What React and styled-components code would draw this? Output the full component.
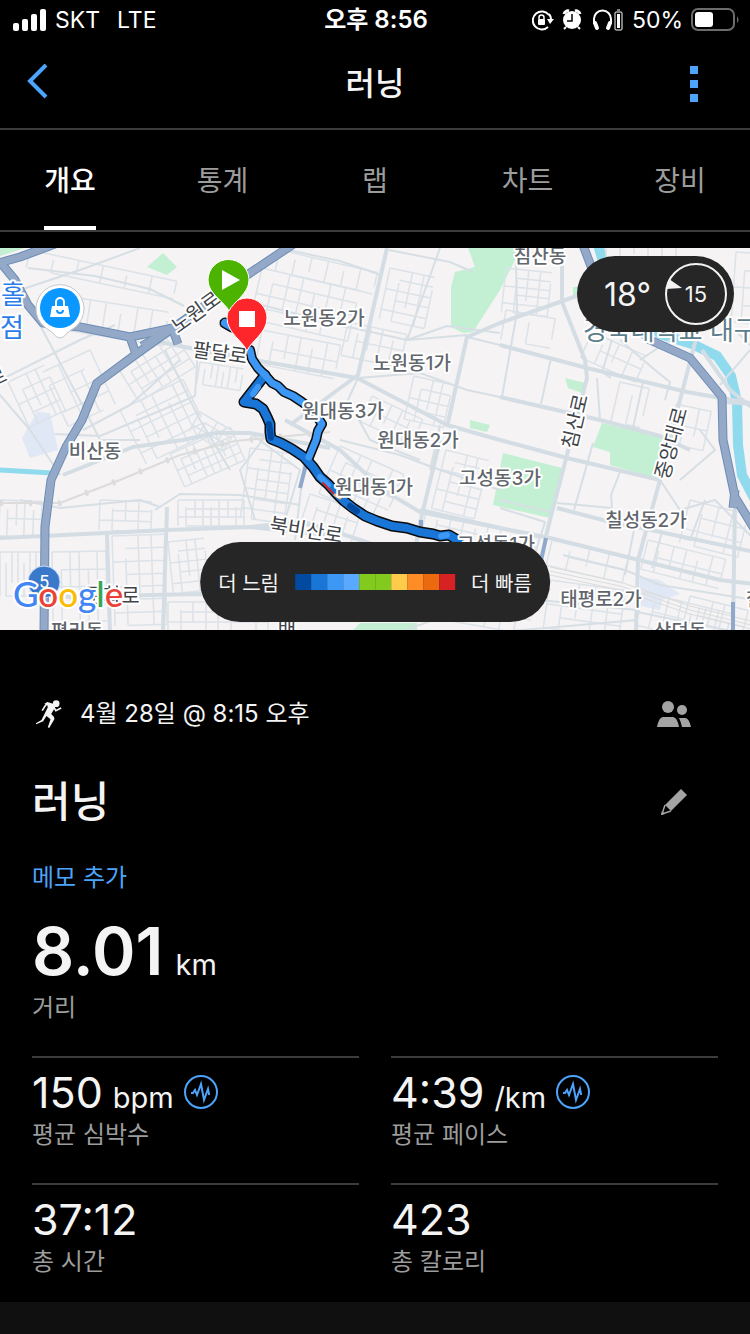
import React, { useState } from "react";
import styled, { createGlobalStyle } from "styled-components";

const tabs = ["개요", "통계", "랩", "차트", "장비"];

// 페이스 범례 색상 (느림 -> 빠름)
const paceColors = [
    "#024a9f",
    "#1a76d6",
    "#3c97f5",
    "#58a9ff",
    "#82ca1e",
    "#82ca1e",
    "#ffcb4b",
    "#ff8d25",
    "#ec6a0f",
    "#d62222",
];

const stats = [
    { value: "150", unit: "bpm", label: "평균 심박수", chart: true },
    { value: "4:39", unit: "/km", label: "평균 페이스", chart: true },
    { value: "37:12", label: "총 시간" },
    { value: "423", label: "총 칼로리" },
];

const highways = [
    "M-5 264L20 257L55 244",
    "M0 262L15 280L28 305L43 323L80 327L130 337L173 328",
    "M295 243L250 273L210 302L173 328L135 355L97 383L82 420L66 447L51 480L45 527L44 635",
    "M130 337L136 354",
    "M172 328L178 344",
    "M142 346L172 328",
    "M583 245L600 290L650 340L690 358L722 397L723 440L735 497L755 530",
    "M735 490L733 508",
];

const mainRoads = [
    "M150 340L200 350L260 361L357 378L447 425L500 440L567 458L660 480",
    "M387 248L358 375L290 425",
    "M447 427L467 337L500 323L560 302L590 291",
    "M562 263V302L585 360L587 378L567 455L550 520L545 540",
    "M500 345L587 368L687 392L755 404",
    "M500 397L600 420L660 436L690 450",
    "M697 335L680 400L660 480L638 560L636 632",
    "M420 510L500 528L550 538L647 562L720 580L755 584",
    "M557 508L603 520L755 552",
    "M0 538L43 536L167 530L250 527L340 536",
    "M167 507L163 632",
    "M107 535L110 632",
    "M63 475L133 447L183 440L215 433L250 433L330 448",
    "M735 500L733 632",
    "M285 420L340 450L383 490L420 512L500 528",
    "M440 440L420 523L415 550",
    "M60 597L200 594L290 600",
    "M250 527L300 522L345 535L420 560",
    "M724 402L755 404",
    "M702 350L730 390L755 410",
];

const midRoads = [
    "M28 268L95 276L150 289L184 306",
    "M20 290L80 270L140 248",
    "M0 380L80 340L115 325",
    "M40 325L85 410L100 440L140 440",
    "M165 350L200 420L230 470",
    "M250 302L340 325L407 340L467 335",
    "M288 250L340 261L381 275",
    "M389 250L450 262L473 272",
    "M407 340L447 326L500 333",
    "M467 337L500 345",
    "M407 340L425 290L440 248",
    "M500 397L467 390L420 373L358 378",
    "M0 395L30 430L60 475",
    "M55 434L100 436L195 396",
    "M195 396L198 350",
    "M20 500L60 508L140 500L160 507",
    "M155 510L180 494L240 495L300 505",
    "M83 430L130 405L180 360",
    "M500 500L550 512",
    "M500 508L545 522L530 570",
    "M637 610L500 596L400 632",
    "M637 612L755 636",
    "M500 632L637 620",
    "M563 555L625 570L660 585L755 600",
    "M652 568L662 532L690 540L705 500",
    "M625 575L634 530",
    "M516 263L517 312L502 397",
    "M597 378L600 420",
    "M551 358L541 404",
    "M643 382L633 428",
    "M593 443L574 510",
    "M620 472L611 495L612 508L557 503",
    "M660 480L680 510L715 500L755 540",
    "M680 480L715 450L700 430",
    "M720 385L750 350",
    "M735 330L755 350",
    "M340 440L400 455L440 470L500 490",
    "M305 455L295 540",
    "M270 430L240 470L255 520",
    "M250 433L300 470L285 520",
    "M358 378L348 400L370 440L420 460",
    "M440 425L430 470",
    "M620 340L655 370L670 382L665 400",
    "M611 378L602 372L612 340",
    "M670 340L640 360",
];

// 골목길 블록: [x, y, 너비, 높이, 각도, 열, 행]
const blocks = [
    [60, 295, 110, 34, 9, 7, 1],
    [30, 250, 150, 18, 12, 6, 1],
    [8, 382, 40, 50, -25, 4, 4],
    [90, 350, 60, 52, 65, 4, 3],
    [118, 368, 66, 40, -32, 7, 4],
    [120, 410, 70, 60, -26, 6, 5],
    [200, 362, 44, 22, 9, 7, 1],
    [200, 412, 40, 22, 30, 4, 3],
    [262, 268, 100, 52, 13, 7, 4],
    [280, 250, 100, 22, 13, 6, 1],
    [262, 330, 80, 34, 11, 6, 2],
    [390, 268, 46, 52, 12, 4, 5],
    [348, 322, 60, 34, 12, 5, 2],
    [414, 376, 40, 44, 13, 4, 4],
    [372, 396, 56, 28, 25, 5, 2],
    [506, 268, 46, 44, 6, 4, 5],
    [506, 310, 50, 30, 10, 2, 1],
    [620, 382, 30, 40, 13, 2, 1],
    [0, 500, 42, 36, 2, 5, 2],
    [0, 552, 42, 44, 0, 7, 1],
    [52, 552, 54, 70, -1, 6, 4],
    [112, 536, 52, 90, -2, 4, 7],
    [100, 500, 52, 30, 2, 4, 3],
    [168, 542, 36, 52, -6, 4, 5],
    [168, 602, 100, 30, 0, 8, 3],
    [178, 500, 66, 26, 0, 8, 3],
    [170, 454, 66, 36, -24, 8, 4],
    [250, 448, 44, 70, 8, 4, 7],
    [310, 494, 54, 40, 18, 5, 3],
    [340, 446, 70, 52, 24, 6, 4],
    [446, 450, 44, 60, 14, 4, 6],
    [426, 512, 116, 20, 13, 9, 2],
    [552, 540, 78, 26, 13, 4, 2],
    [550, 580, 76, 48, 8, 5, 4],
    [648, 540, 80, 30, 14, 6, 2],
    [644, 592, 90, 34, 14, 7, 2],
    [690, 500, 60, 44, 14, 4, 3],
    [676, 404, 36, 40, 12, 3, 2],
    [592, 332, 60, 28, 24, 4, 2],
    [450, 560, 90, 60, 10, 6, 4],
    [690, 596, 60, 34, 14, 5, 2],
    [606, 240, 70, 20, 0, 5, 1],
    [736, 252, 20, 70, 4, 2, 4],
];

const route =
    "M250 350L252 359L258 368L265 375L272 383L278 386L284 392L293 396L302 402L314 411L318 418L322 424L318 431L316 440L309 457";
const routeSouth =
    "M265 375L258 384L251 393L244 402L256 404L263 409L267 417L270 424L270 432L271 439L281 443L292 449L304 457L313 467L320 477L328 484L337 494L344 501L353 508L365 516L377 521L392 526L407 528L420 532L433 534L440 536L449 535L459 541";

const districts = [
    ["침산동", 540, 263],
    ["노원동2가", 324, 325],
    ["노원동1가", 412, 370],
    ["원대동3가", 343, 418],
    ["원대동2가", 418, 447],
    ["원대동1가", 374, 494],
    ["고성동3가", 500, 485],
    ["고성동1가", 496, 551],
    ["칠성동2가", 646, 527],
    ["태평로2가", 601, 606],
    ["비산동", 95, 458],
    ["평리동", 77, 638],
    ["상덕동", 680, 638],
    ["칠성동", 772, 606],
];

// [이름, x, y, 각도]
const streets = [
    ["노원로", 200, 318, -36],
    ["팔달로", 219, 360, 8],
    ["북비산로", 305, 537, 9],
    ["침산로", 582, 423, -77],
    ["중앙대로", 678, 445, -75],
    ["문화로", 112, 603, 0],
    ["로", 0, 384, -25],
    ["배", 287, 636, 0],
];

const blockPath = ([, , w, h, , cols, rows]) => {
    let d = "";
    for (let i = 0; i <= cols; i++) {
        const x = Math.round((w / cols) * i);
        // 골목 길이를 조금씩 다르게
        const top = i % 3 === 1 ? Math.round(h / 4) : 0;
        const bottom = i % 4 === 2 ? Math.round(h * 0.7) : h;
        d += `M${x} ${top}V${bottom}`;
    }
    for (let j = 0; j <= rows; j++) {
        const y = Math.round((h / rows) * j);
        const left = j % 2 === 1 ? Math.round(w / cols) : 0;
        d += `M${left} ${y}H${w}`;
    }
    return d;
};

function StatusBar() {
    return (
        <StatusContainer>
            <StatusSide>
                <svg width="34" height="22" viewBox="0 0 34 22" fill="#fff">
                    <rect x="0" y="14" width="6" height="8" rx="2" />
                    <rect x="9" y="10" width="6" height="12" rx="2" />
                    <rect x="18" y="5" width="6" height="17" rx="2" />
                    <rect x="27" y="0" width="6" height="22" rx="2" />
                </svg>
                <Carrier>SKT</Carrier>
                <span>LTE</span>
            </StatusSide>
            <Clock>오후 8:56</Clock>
            <StatusSide $end>
                <svg width="92" height="24" viewBox="0 0 92 24" fill="none" stroke="#fff">
                    {/* 화면 회전 잠금 */}
                    <path d="M17 7A9 9 0 1 0 16 19M17 6A9 9 0 0 1 19 11" strokeWidth="2" />
                    <path d="M15 11H22L18 16Z" fill="#fff" stroke="none" />
                    <rect x="6" y="11" width="7" height="6" rx="1" fill="#fff" stroke="none" />
                    <path d="M7 11V9.500A2.500 2.500 0 0 1 12 9.500V11" strokeWidth="1.500" />
                    {/* 알람 */}
                    <circle cx="40" cy="12" r="9" fill="#fff" stroke="none" />
                    <path d="M32 6A4 4 0 0 1 37 3M43 3A4 4 0 0 1 48 6" strokeWidth="3" />
                    <path d="M34 19L32 21M46 19L48 21" strokeWidth="2" />
                    <path d="M40 6V13H35" stroke="#000" strokeWidth="1.500" />
                    {/* 헤드폰 배터리 */}
                    <path d="M62 16V11A8 8 0 0 1 79 11V16" strokeWidth="2" />
                    <path d="M63 15L65 20M78 15L76 20" strokeWidth="4" strokeLinecap="round" />
                    <rect x="83" y="4" width="7" height="18" rx="1" strokeWidth="1" />
                    <rect x="85" y="6" width="3" height="14" fill="#fff" stroke="none" />
                    <path d="M85 2H88" strokeWidth="1" />
                </svg>
                <span>50%</span>
                <svg width="48" height="24" viewBox="0 0 48 24">
                    <rect x="1" y="1" width="42" height="21" rx="6" fill="none" stroke="#6c6c6c" strokeWidth="2" />
                    <rect x="4" y="4" width="18" height="15" rx="3" fill="#fff" />
                    <path d="M46 8Q49 12 46 15Z" fill="#6c6c6c" />
                </svg>
            </StatusSide>
        </StatusContainer>
    );
}

function RunMap() {
    return (
        <MapContainer>
            <MapCanvas viewBox="0 248 750 382" role="img" aria-label="러닝 경로 지도">
                <rect x="0" y="248" width="750" height="382" fill="#f5f3f4" />
                <g fill="#c3f0d3">
                    <path d="M468 248L475 267L455 272L451 287V327L463 333L473 332L500 290L515 260L518 248Z" />
                    <path d="M147 267L163 253L177 267L167 275Z" />
                    <path d="M565 378L585 383L582 393L568 388Z" />
                    <path d="M602 423L662 437L655 478L610 465V452L593 447Z" />
                    <path d="M503 453L562 468L550 518L493 505Z" />
                    <path d="M470 420L490 425L487 432L470 428Z" />
                    <path d="M353 630L360 623H417V630Z" />
                    <path d="M0 248H25L0 256Z" />
                    <path d="M573 287H580V295H573Z" />
                </g>
                <g fill="#e0e7f5">
                    <path d="M37 412L50 413L58 450L30 458L22 438Z" />
                    <path d="M640 577L660 580L680 594L662 600L660 610L640 606Z" />
                </g>
                <g fill="none" stroke="#8fdaec">
                    <path d="M0 470L52 473" strokeWidth="5" />
                    <path d="M598 245L612 290L660 334L692 344L717 356L731 376L737 402L738 445L742 475L755 500" strokeWidth="10" />
                </g>
                <g fill="none" stroke="#dbe2e8" strokeWidth="1.500">
                    {blocks.map((block, idx) => (
                        <path
                            key={`block-${idx}`}
                            d={blockPath(block)}
                            transform={`translate(${block[0]} ${block[1]}) rotate(${block[4]})`}
                        />
                    ))}
                </g>
                <g fill="none" stroke="#d7dfe5" strokeWidth="2" strokeLinejoin="round">
                    {midRoads.map((d) => (
                        <path key={d} d={d} />
                    ))}
                </g>
                <g fill="none" stroke="#d4dde4" strokeWidth="4" strokeLinejoin="round">
                    {mainRoads.map((d) => (
                        <path key={d} d={d} />
                    ))}
                </g>
                {/* 철도 */}
                <g fill="none" stroke="#dcdcdc">
                    <path d="M0 503L60 503L120 480L180 455L235 441L330 432" strokeWidth="2" />
                    <path d="M0 503L60 503L120 480L180 455L235 441L330 432" strokeWidth="6" strokeDasharray="3 26" />
                    <path d="M550 567L620 582L690 606L755 622" strokeWidth="1" />
                    <path d="M550 571L620 586L690 610L755 626" strokeWidth="1" />
                    <path d="M550 575L620 590L690 614L755 630" strokeWidth="1" />
                </g>
                <g fill="none" stroke="#6d8cb6" strokeWidth="9" strokeLinejoin="round">
                    {highways.map((d) => (
                        <path key={d} d={d} />
                    ))}
                </g>
                <g fill="none" stroke="#93a9c7" strokeWidth="7" strokeLinejoin="round">
                    {highways.map((d) => (
                        <path key={d} d={d} />
                    ))}
                </g>
                <path
                    d="M308 457L300 488M421 520V532M546 538L540 565M733 602V630"
                    fill="none"
                    stroke="#8fa8cb"
                    strokeWidth="4"
                />

                {/* 달린 경로 */}
                <g fill="none" strokeLinejoin="round" strokeLinecap="round">
                    <path d={route} stroke="#0b0b0b" strokeWidth="10" />
                    <path d={routeSouth} stroke="#0b0b0b" strokeWidth="11" />
                    <path d="M225 323L232 327" stroke="#0b0b0b" strokeWidth="11" />
                    <path d={routeSouth} stroke="#1a76d6" strokeWidth="8" />
                    <path d={route} stroke="#3c97f5" strokeWidth="7" />
                    <path d="M225 323L232 327" stroke="#3c97f5" strokeWidth="8" />
                    <path d="M269 424L271 438M350 506L357 511" stroke="#024a9f" strokeWidth="6" />
                    <path d="M320 477L328 485M253 394L258 387M441 536L447 535" stroke="#3c97f5" strokeWidth="6" />
                    <path d="M323 483L333 493" stroke="#d62222" strokeWidth="2" />
                    <path d="M335 495L340 498" stroke="#ffb36b" strokeWidth="3" />
                </g>

                <circle cx="44" cy="582" r="16" fill="#3a78c9" stroke="#c9dafa" strokeWidth="1" />
                <ShieldText x="44" y="588">5</ShieldText>

                {districts.map(([name, x, y]) => (
                    <DistrictText key={name} x={x} y={y}>
                        {name}
                    </DistrictText>
                ))}
                {streets.map(([name, x, y, angle]) => (
                    <StreetText key={name} x={x} y={y} transform={`rotate(${angle} ${x} ${y})`}>
                        {name}
                    </StreetText>
                ))}
                <PlaceText x="583" y="340" $color="#5c7d8b">
                    경북대학교 대구
                </PlaceText>
                <PlaceText x="1" y="304" $color="#2b7de9">
                    홀
                </PlaceText>
                <PlaceText x="0" y="337" $color="#2b7de9">
                    점
                </PlaceText>

                {/* 쇼핑 핀 */}
                <path
                    d="M60 338Q56 338 53 333L49 330A24 24 0 1 1 71 330L67 333Q64 338 60 338Z"
                    fill="#fff"
                    stroke="#c4c8cc"
                    strokeWidth="1"
                />
                <circle cx="60" cy="308" r="20" fill="#0a97ff" />
                <path d="M52 306H68L70 317H50Z" fill="#fff" />
                <path d="M56 306V302A4 4 0 0 1 64 302V306" fill="none" stroke="#fff" strokeWidth="2" />
                <path d="M57 310A3 3 0 0 0 63 310" fill="none" stroke="#0a97ff" strokeWidth="2" />

                {/* 도착, 출발 핀 */}
                <path
                    d="M247 351C243 341 227 333 227 318A20 20 0 0 1 267 318C267 333 251 341 247 351Z"
                    fill="#ff262b"
                    stroke="#fff"
                    strokeWidth="1"
                />
                <rect x="239" y="311" width="16" height="16" fill="#fff" />
                <path
                    d="M229 311C225 302 208 294 208 280A20 20 0 0 1 249 280C249 294 233 302 229 311Z"
                    fill="#4cb400"
                    stroke="#fff"
                    strokeWidth="1"
                />
                <path d="M222 270L240 280L222 290Z" fill="#fff" />

                <LogoText x="13" y="607">
                    <tspan fill="#4285f4">G</tspan>
                    <tspan fill="#ea4335">o</tspan>
                    <tspan fill="#fbbc05">o</tspan>
                    <tspan fill="#4285f4">g</tspan>
                    <tspan fill="#34a853">l</tspan>
                    <tspan fill="#ea4335">e</tspan>
                </LogoText>
            </MapCanvas>

            <Weather>
                <span>18°</span>
                <Wind>
                    <svg width="64" height="64" viewBox="0 0 64 64">
                        <circle cx="32" cy="32" r="30" fill="none" stroke="#f4f4f4" strokeWidth="2" />
                        <path d="M5 17L18 26L2 27Z" fill="#f4f4f4" />
                    </svg>
                    <WindSpeed>15</WindSpeed>
                </Wind>
            </Weather>

            <Legend>
                <span>더 느림</span>
                <PaceBar>
                    {paceColors.map((color, idx) => (
                        <PaceStep key={`pace-${idx}`} $color={color} />
                    ))}
                </PaceBar>
                <span>더 빠름</span>
            </Legend>
        </MapContainer>
    );
}

function StatCard({ stat }) {
    return (
        <Card>
            <ValueRow>
                <Value>{stat.value}</Value>
                {stat.unit && <Unit>{stat.unit}</Unit>}
                {stat.chart && (
                    <ChartButton aria-label={`${stat.label} 차트`}>
                        <svg width="34" height="34" viewBox="0 0 34 34" fill="none" stroke="#4ca4fd">
                            <circle cx="17" cy="17" r="16" strokeWidth="2" />
                            <path
                                d="M7 18L9 18L11 15L13 20L17 9L20 25L24 14L25 19L26 19"
                                strokeWidth="2"
                            />
                        </svg>
                    </ChartButton>
                )}
            </ValueRow>
            <Label>{stat.label}</Label>
        </Card>
    );
}

function App() {
    const [activeTab, setActiveTab] = useState(0);

    return (
        <Container>
            <GlobalStyle />
            <StatusBar />
            <Header>
                <IconButton aria-label="뒤로">
                    <svg width="24" height="40" viewBox="0 0 24 40" fill="none" stroke="#4ca4fd">
                        <path d="M20 1L4 17L20 33" strokeWidth="4" />
                    </svg>
                </IconButton>
                <HeaderTitle>러닝</HeaderTitle>
                <IconButton aria-label="더보기" $end>
                    <svg width="8" height="36" viewBox="0 0 8 36" fill="#4ca4fd">
                        <path d="M0 0H8V8H0ZM0 14H8V22H0ZM0 28H8V36H0Z" />
                    </svg>
                </IconButton>
            </Header>
            <Tabs>
                {tabs.map((tab, idx) => (
                    <Tab key={tab} $active={idx === activeTab} onClick={() => setActiveTab(idx)}>
                        {tab}
                    </Tab>
                ))}
            </Tabs>
            <RunMap />
            <Summary>
                <Row>
                    <Activity>
                        <svg width="27" height="28" viewBox="0 0 80 84" fill="none" stroke="#f4f4f4">
                            <circle cx="63" cy="11" r="10" fill="#f4f4f4" stroke="none" />
                            <path d="M28 11L36 6L54 11L59 24L48 42L56 50L58 57L42 84L38 82L46 58L34 48L24 64L3 73L2 70L19 60L38 22L36 15Z" fill="#f4f4f4" stroke="none" />
                            <path d="M38 10L31 16L21 32" strokeWidth="5" />
                            <path d="M54 18L62 32L78 24" strokeWidth="5" />
                        </svg>
                        <ActivityDate>4월 28일 @ 8:15 오후</ActivityDate>
                    </Activity>
                    <IconButton aria-label="공개 범위" $end>
                        <svg width="34" height="26" viewBox="0 0 34 26" fill="#a4a4a4">
                            <circle cx="11" cy="6" r="6" />
                            <circle cx="25" cy="9" r="5" />
                            <path d="M0 26Q2 16 6 16H16Q20 16 22 26Z" />
                            <path d="M22 17H28Q32 17 34 26H25Q24 21 22 17Z" />
                        </svg>
                    </IconButton>
                </Row>
                <TitleRow>
                    <Title>러닝</Title>
                    <IconButton aria-label="이름 수정" $edit>
                        <svg width="26" height="26" viewBox="0 0 26 26" fill="#a4a4a4">
                            <path d="M20 0L26 6L10 22L4 16Z" />
                            <path d="M4 16L1 25L10 22" fill="none" stroke="#a4a4a4" strokeWidth="1.500" />
                            <path d="M1 22L4 25L0 26Z" />
                        </svg>
                    </IconButton>
                </TitleRow>
                <MemoButton>메모 추가</MemoButton>
                <Distance>
                    <DistanceValue>8.01</DistanceValue>
                    <Unit>km</Unit>
                </Distance>
                <Label>거리</Label>
                <StatGrid>
                    {stats.map((stat) => (
                        <StatCard key={stat.label} stat={stat} />
                    ))}
                </StatGrid>
            </Summary>
            <Footer />
        </Container>
    );
}

const GlobalStyle = createGlobalStyle`
    * {
        box-sizing: border-box;
    }
    body {
        margin: 0;
        background: #000;
        color: #f4f4f4;
        font-family: Inter, "Noto Sans CJK KR", sans-serif;
    }
    button {
        padding: 0;
        border: 0;
        background: none;
        color: inherit;
        font: inherit;
        cursor: pointer;
    }
    svg {
        display: block;
        flex-shrink: 0;
    }
`;

const Container = styled.div`
    min-height: 100vh;
    display: flex;
    flex-direction: column;
`;

const StatusContainer = styled.div`
    height: 40px;
    padding: 0 11px 0 13px;
    display: grid;
    grid-template-columns: 1fr auto 1fr;
    align-items: center;
    color: #fff;
    font-size: 23px;
    line-height: 32px;
`;

const StatusSide = styled.div`
    display: flex;
    align-items: center;
    justify-content: ${({ $end }) => ($end ? "flex-end" : "flex-start")};
    gap: 8px;
`;

const Carrier = styled.span`
    margin-right: 9px;
`;

const Clock = styled.div`
    font-size: 24px;
    font-weight: 600;
`;

const Header = styled.header`
    height: 90px;
    padding: 0 26px;
    border-bottom: 2px solid #3c3c3c;
    display: grid;
    grid-template-columns: 1fr auto 1fr;
    align-items: center;
`;

const HeaderTitle = styled.h1`
    margin: 0;
    font-size: 32px;
    font-weight: 500;
    line-height: 40px;
`;

const IconButton = styled.button`
    min-width: 34px;
    padding-right: ${({ $edit }) => ($edit ? "4px" : "0")};
    display: flex;
    justify-content: ${({ $end, $edit }) => ($end || $edit ? "flex-end" : "flex-start")};
    ${Header} & {
        padding-right: ${({ $end }) => ($end ? "26px" : "0")};
    }
`;

const Tabs = styled.nav`
    height: 102px;
    padding: 0 44px;
    border-bottom: 2px solid #3c3c3c;
    display: flex;
    justify-content: space-between;
`;

const Tab = styled.button`
    && {
        min-width: 52px;
        padding-top: 2px;
        border-bottom: 4px solid ${({ $active }) => ($active ? "#fff" : "transparent")};
        color: ${({ $active }) => ($active ? "#fff" : "#9c9c9c")};
        font-size: 28px;
        font-weight: ${({ $active }) => ($active ? 500 : 400)};
    }
`;

const MapContainer = styled.section`
    position: relative;
    margin-top: 16px;
`;

const MapCanvas = styled.svg`
    width: 100%;
    height: auto;
`;

const MapText = styled.text`
    font-family: Inter, "Noto Sans CJK KR", sans-serif;
    paint-order: stroke;
    stroke: #fff;
    stroke-width: 4px;
    stroke-linejoin: round;
`;

const DistrictText = styled(MapText)`
    fill: #62676d;
    font-size: 19px;
    font-weight: 500;
    text-anchor: middle;
`;

const StreetText = styled(MapText)`
    fill: #3f4449;
    font-size: 20px;
    text-anchor: middle;
`;

const PlaceText = styled(MapText)`
    fill: ${({ $color }) => $color};
    font-size: 26px;
`;

const ShieldText = styled.text`
    fill: #fff;
    font-family: Roboto, sans-serif;
    font-size: 18px;
    text-anchor: middle;
`;

const LogoText = styled(MapText)`
    font-family: Lato, sans-serif;
    font-size: 35px;
    font-weight: 500;
`;

const Weather = styled.div`
    position: absolute;
    top: 8px;
    right: 16px;
    height: 76px;
    padding: 0 6px 0 27px;
    border-radius: 38px;
    background: #262626;
    display: flex;
    align-items: center;
    gap: 13px;
    font-size: 32px;
`;

const Wind = styled.div`
    display: grid;
    place-items: center;
    > * {
        grid-area: 1 / 1;
    }
`;

const WindSpeed = styled.span`
    font-size: 22px;
`;

const Legend = styled.div`
    position: absolute;
    bottom: 8px;
    left: 50%;
    transform: translateX(-50%);
    height: 80px;
    padding: 0 18px;
    border-radius: 40px;
    background: #262626;
    display: flex;
    align-items: center;
    gap: 16px;
    font-size: 20px;
    white-space: nowrap;
`;

const PaceBar = styled.div`
    display: flex;
`;

const PaceStep = styled.div`
    width: 16px;
    height: 16px;
    background: ${({ $color }) => $color};
`;

const Summary = styled.main`
    padding: 60px 32px 24px;
`;

const Row = styled.div`
    height: 48px;
    padding-right: 27px;
    display: flex;
    align-items: center;
    justify-content: space-between;
`;

const TitleRow = styled(Row)`
    margin-top: 40px;
`;

const Activity = styled.div`
    padding-left: 3px;
    display: flex;
    align-items: center;
    gap: 18px;
`;

const ActivityDate = styled.span`
    font-size: 24px;
    line-height: 32px;
`;

const Title = styled.h2`
    margin: 0;
    font-size: 42px;
    font-weight: 500;
    line-height: 48px;
`;

const MemoButton = styled.button`
    && {
        margin-top: 36px;
        display: block;
        color: #4ca4fd;
        font-size: 24px;
        line-height: 32px;
    }
`;

const ValueRow = styled.div`
    display: flex;
    align-items: baseline;
    gap: 10px;
    line-height: 48px;
`;

const Distance = styled(ValueRow)`
    margin: 21px 0 5px;
    gap: 12px;
    line-height: 72px;
`;

const Value = styled.span`
    font-size: 43px;
`;

const DistanceValue = styled.span`
    font-size: 66px;
    font-weight: 600;
`;

const Unit = styled.span`
    font-size: 29px;
    line-height: 32px;
`;

const ChartButton = styled.button`
    align-self: center;
`;

const Label = styled.div`
    margin-top: 3px;
    color: #9c9c9c;
    font-size: 24px;
    line-height: 32px;
`;

const StatGrid = styled.div`
    margin-top: 32px;
    display: grid;
    grid-template-columns: 1fr 1fr;
    gap: 32px;
`;

const Card = styled.div`
    padding-top: 10px;
    border-top: 2px solid #3c3c3c;
`;

const Footer = styled.div`
    min-height: 32px;
    flex-grow: 1;
    background: #101010;
`;

export default App;
